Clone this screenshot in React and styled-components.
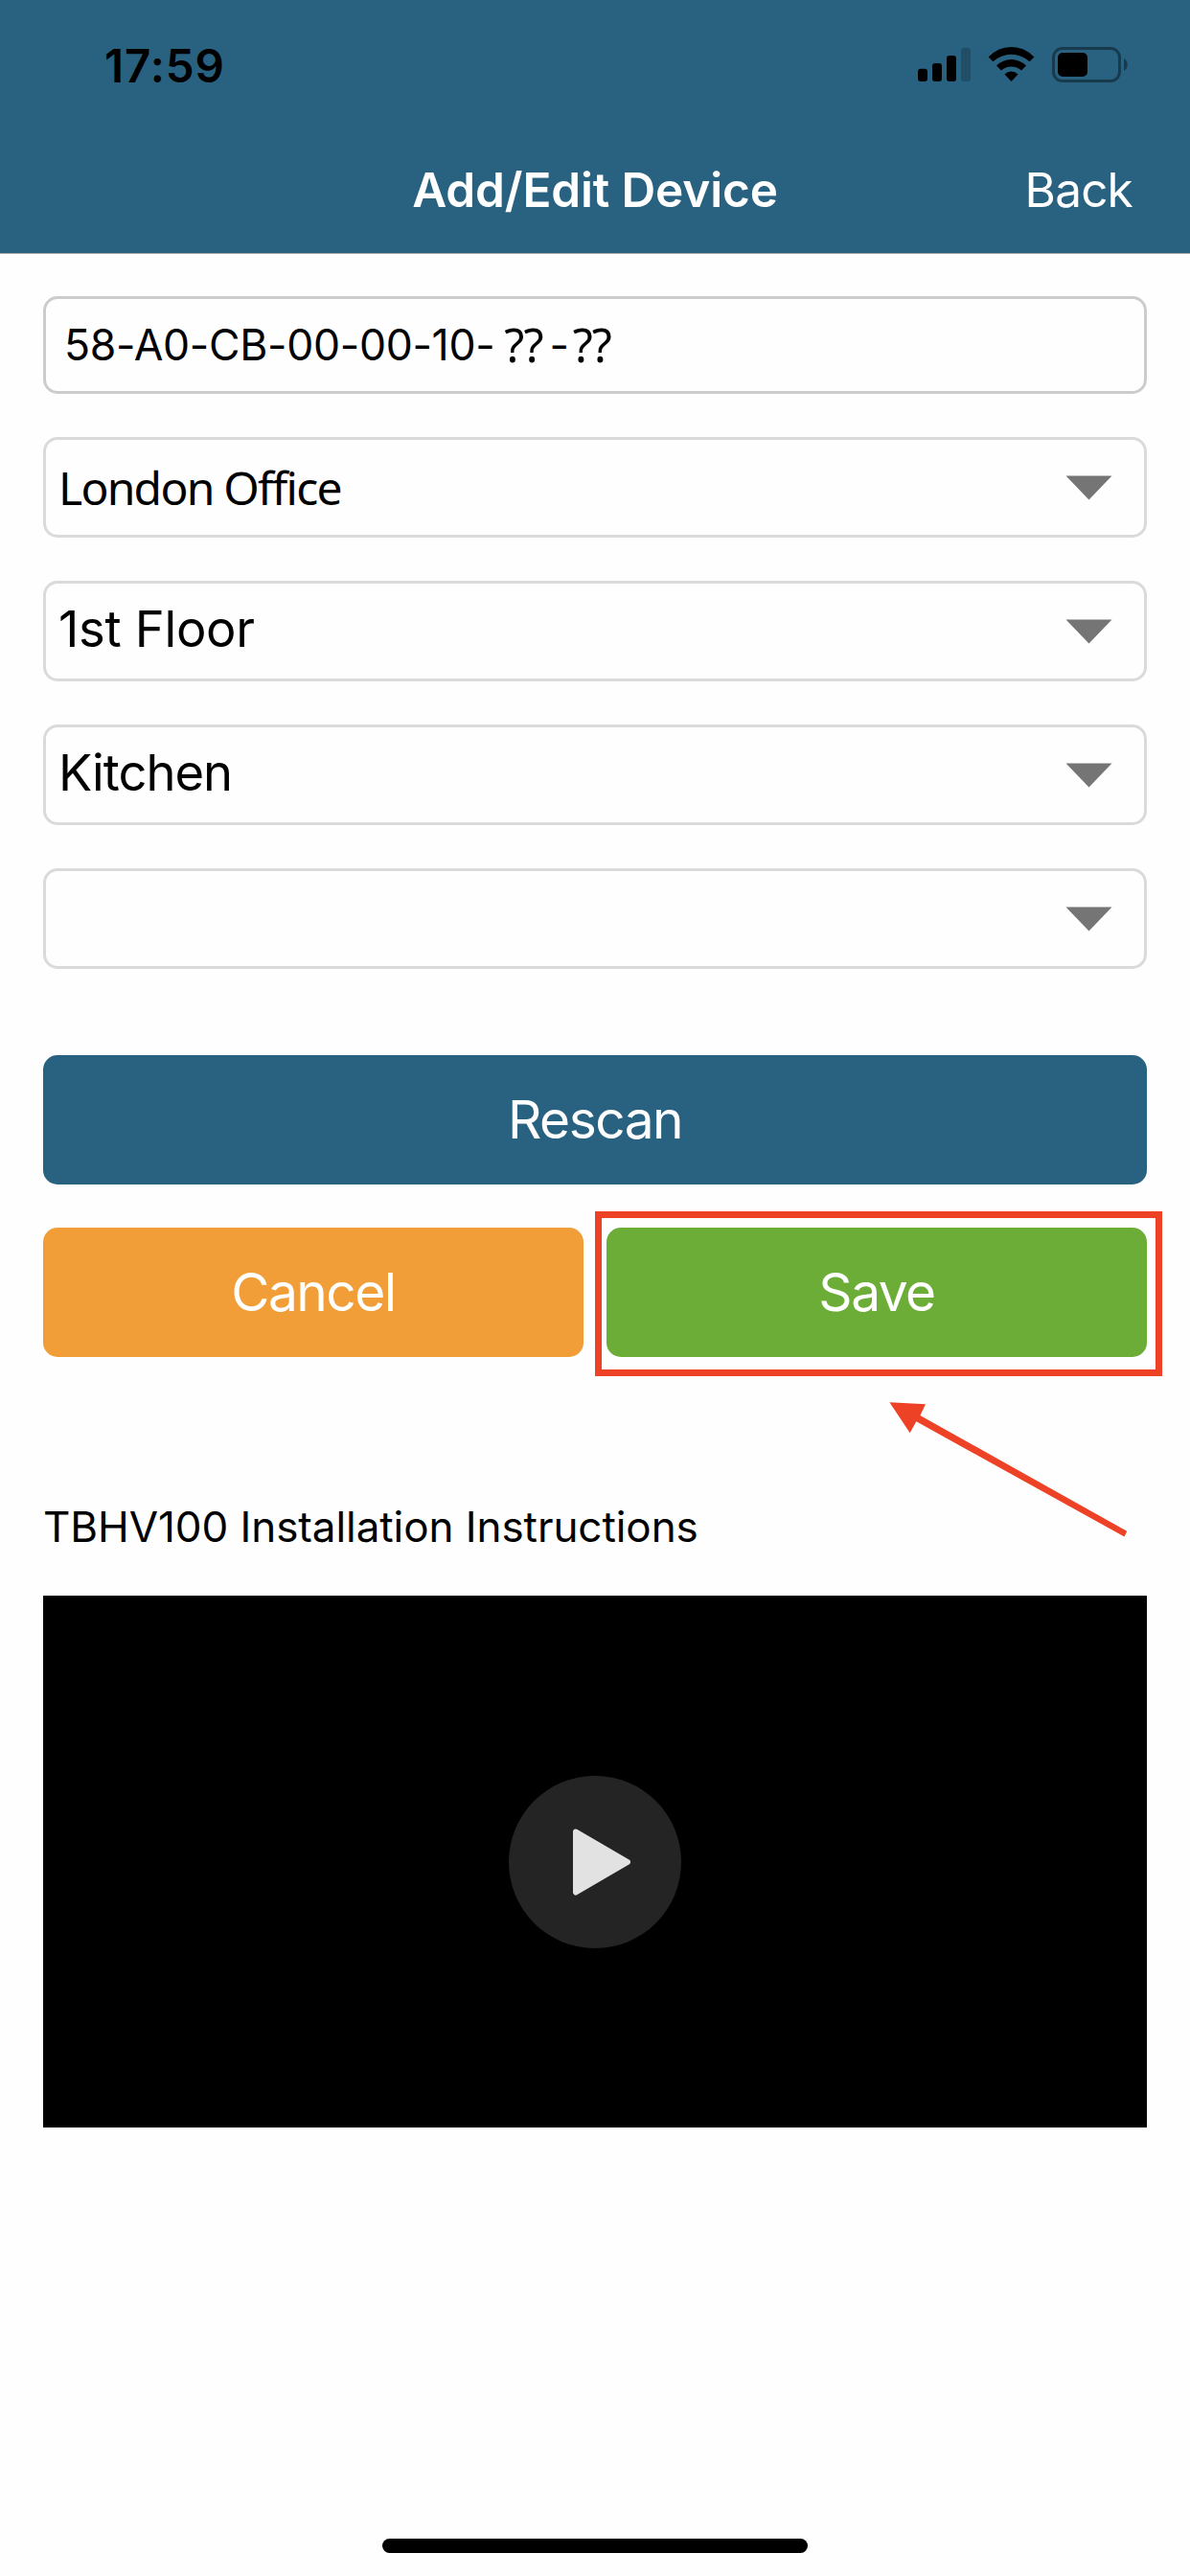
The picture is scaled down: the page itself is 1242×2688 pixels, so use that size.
import React from "react";
import styled, { createGlobalStyle } from "styled-components";

const GlobalStyle = createGlobalStyle`
  * { box-sizing: border-box; }
  body {
    margin: 0;
    background: #fefefe;
    font-family: Inter, "Liberation Sans", sans-serif;
    color: #000;
  }
`;

const Screen = styled.div`
  display: flex;
  flex-direction: column;
  width: 1242px;
  height: 2688px;
  overflow: hidden;
`;

const Header = styled.header`
  background: #296280;
  border-bottom: 1px solid #a9a9a9;
  height: 265px;
`;

const StatusBar = styled.div`
  display: flex;
  justify-content: space-between;
  align-items: center;
  height: 136px;
  padding: 0 65px 0 109px;
`;

const Clock = styled.span`
  font-size: 47.5px;
  font-weight: 600;
  letter-spacing: 0.9px;
`;

const StatusIcons = styled.div`
  display: flex;
  align-items: center;
  gap: 18px;
`;

const NavBar = styled.nav`
  display: grid;
  grid-template-columns: 1fr auto 1fr;
  align-items: center;
  height: 124px;
  padding: 0 60px;
  color: #fff;
  font-size: 49.5px;
`;

const Title = styled.h1`
  grid-column: 2;
  margin: 0;
  font-size: inherit;
  font-weight: 600;
  letter-spacing: -0.15px;
`;

const BackLink = styled.a`
  justify-self: end;
  letter-spacing: -0.8px;
`;

const Content = styled.main`
  display: flex;
  flex-direction: column;
  padding: 44px 45px 0;
`;

const Fields = styled.div`
  display: flex;
  flex-direction: column;
  gap: 45px;
`;

const Field = styled.div`
  display: flex;
  align-items: center;
  border: 3px solid #dadada;
  border-radius: 15px;
  height: 105px;
  padding: 0 33px 0 13px;
`;

const AddressField = styled(Field)`
  border-color: #ccc;
  height: 102px;
  padding-left: 19px;
`;

const Address = styled.span`
  font-size: 44.5px;
  letter-spacing: -0.3px;
  white-space: pre;
`;

const Masked = styled.span`
  font-family: "Noto Sans", sans-serif;
  font-size: 48.5px;
  line-height: 0;
  letter-spacing: -1px;
  vertical-align: -1.5px;
  margin: 0 ${(p) => (p.$last ? 0 : 7)}px 0 ${(p) => (p.$last ? 4 : 10)}px;
`;

const Value = styled.span`
  flex: 1;
  font-size: 52.5px;
  letter-spacing: ${(p) => p.$spacing}px;
  padding-bottom: 5px;
`;

const HumanistValue = styled(Value)`
  font-family: "Noto Sans", sans-serif;
  font-size: 48px;
  padding-bottom: 0;
`;

const Buttons = styled.div`
  display: grid;
  grid-template-columns: 1fr 1fr;
  gap: 45px 24px;
  margin-top: 90px;
`;

const Button = styled.button`
  width: 100%;
  height: 135px;
  border: 0;
  border-radius: 15px;
  padding: 0 0 2px;
  background: ${(p) => p.$color};
  color: #fff;
  font: 400 55px Inter, "Liberation Sans", sans-serif;
  letter-spacing: -1.5px;
`;

const FullRow = styled.div`
  grid-column: 1 / -1;
  display: flex;
`;

const Highlighted = styled.div`
  position: relative;
`;

const Frame = styled.div`
  position: absolute;
  inset: -17px -15.5px -19.5px -12.5px;
  border: 7px solid #ed4225;
`;

const Pointer = styled.svg`
  position: absolute;
  left: 287px;
  top: 174px;
`;

const Caption = styled.h2`
  margin: 132px 0 0;
  height: 90px;
  line-height: 90px;
  font-size: 44px;
  font-weight: 400;
  letter-spacing: -0.07px;
`;

const Video = styled.div`
  display: flex;
  align-items: center;
  justify-content: center;
  height: 555px;
  margin-top: 27px;
  background: #000;
`;

const PlayButton = styled.div`
  display: flex;
  align-items: center;
  justify-content: center;
  width: 180px;
  height: 180px;
  border-radius: 50%;
  padding-left: 14px;
  background: #242424;
`;

const HomeIndicator = styled.div`
  width: 444px;
  height: 15px;
  border-radius: 8px;
  background: #000;
  margin: auto auto 24px;
`;

const SignalIcon = () => (
  <svg width="55" height="38" viewBox="958 49 55 38">
    <rect x="958" y="71.7" width="10" height="13.3" rx="3" />
    <rect x="973" y="66" width="10" height="19" rx="3" />
    <rect x="988" y="58" width="10" height="27" rx="3" />
    <rect x="1003" y="50" width="10" height="35" rx="3" opacity="0.2" />
  </svg>
);

const WifiIcon = () => (
  <svg width="49" height="38" viewBox="1031 49 49 38">
    <path d="M1031.6 59.4Q1042 49 1055.5 49T1079.4 59.4L1074.6 64.3Q1066 56.7 1055.5 56.7T1036.4 64.3Z" />
    <path d="M1040 68.6Q1046.6 62 1055.5 62T1071 68.6L1066 73.6Q1061.5 69.5 1055.5 69.5T1045 73.6Z" />
    <path d="M1048.5 77.6Q1051.5 74.5 1055.5 74.5T1062.5 77.6L1055.5 85Z" />
  </svg>
);

const BatteryIcon = () => (
  <svg width="79" height="38" viewBox="1098 49 79 38">
    <rect x="1099.5" y="50.5" width="69" height="34" rx="9.5" fill="none" stroke="#000" strokeWidth="3" opacity="0.4" />
    <rect x="1104" y="55" width="31" height="25" rx="5" />
    <path d="M1173 61a7.5 7.5 0 0 1 0 13z" opacity="0.4" />
  </svg>
);

const Caret = () => (
  <svg width="49" height="26" viewBox="0 0 49 26">
    <path d="M0.5 0.5H48.5L24.5 25.5Z" fill="#757575" />
  </svg>
);

export default function App() {
  return (
    <Screen>
      <GlobalStyle />
      <Header>
        <StatusBar>
          <Clock>17:59</Clock>
          <StatusIcons>
            <SignalIcon />
            <WifiIcon />
            <BatteryIcon />
          </StatusIcons>
        </StatusBar>
        <NavBar>
          <Title>Add/Edit Device</Title>
          <BackLink>Back</BackLink>
        </NavBar>
      </Header>
      <Content>
        <Fields>
          <AddressField>
            <Address>
              58-A0-CB-00-00-10-<Masked>??</Masked>-<Masked $last>??</Masked>
            </Address>
          </AddressField>
          <Field>
            <HumanistValue $spacing={-1.75}>London Office</HumanistValue>
            <Caret />
          </Field>
          <Field>
            <Value $spacing={-0.3}>1st Floor</Value>
            <Caret />
          </Field>
          <Field>
            <Value $spacing={-1}>Kitchen</Value>
            <Caret />
          </Field>
          <Field>
            <Value />
            <Caret />
          </Field>
        </Fields>
        <Buttons>
          <FullRow>
            <Button $color="#296280">Rescan</Button>
          </FullRow>
          <Button $color="#f19e38">Cancel</Button>
          <Highlighted>
            <Button $color="#6bad36">Save</Button>
            <Frame />
            <Pointer width="270" height="160" viewBox="920 1455 270 160" fill="#ed4225">
              <path d="M928.4 1463.3L966 1465.3L960.4 1477L1176.2 1597.7L1173.5 1603.5L956.3 1483.3L949.7 1495.3Z" />
            </Pointer>
          </Highlighted>
        </Buttons>
        <Caption>TBHV100 Installation Instructions</Caption>
        <Video>
          <PlayButton>
            <svg width="60" height="70" viewBox="0 0 60 70">
              <path d="M3 3.5L57 35L3 66.5Z" fill="#e2e2e2" stroke="#e2e2e2" strokeWidth="6" strokeLinejoin="round" />
            </svg>
          </PlayButton>
        </Video>
      </Content>
      <HomeIndicator />
    </Screen>
  );
}
